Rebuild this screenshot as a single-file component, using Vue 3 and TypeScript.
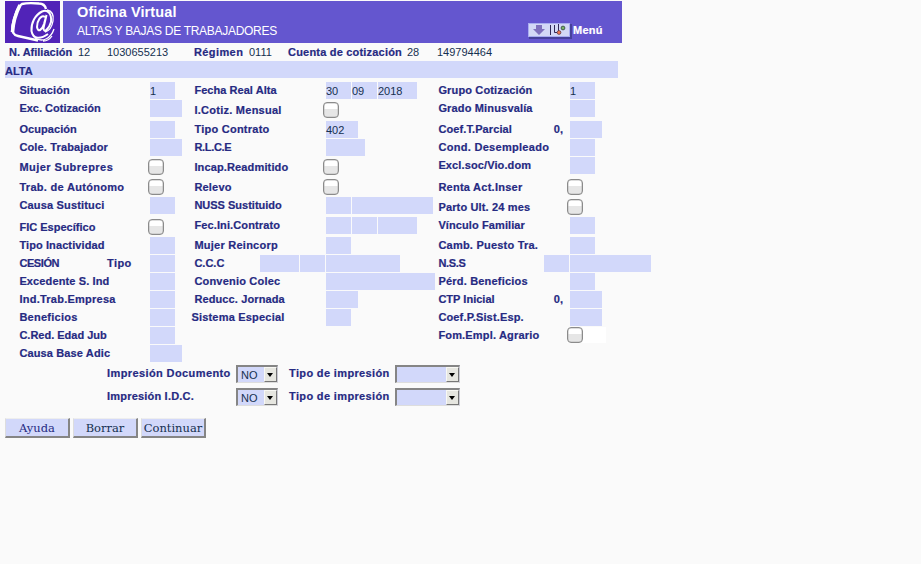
<script setup lang="ts">
interface Cell {
  label: string
  spacing?: number
  middle?: string
  suffix?: string
  before?: number[]
  fields?: number[]
  values?: string[]
  check?: boolean
  tail?: boolean
  outdent?: boolean
}
interface Row {
  height: number
  cells: Cell[]
}

const rows: Row[] = [
  { height: 18, cells: [
    { label: 'Situación', spacing: 0.1, fields: [25], values: ['1'] },
    { label: 'Fecha Real Alta', spacing: 0.05, fields: [25, 25, 39], values: ['30', '09', '2018'] },
    { label: 'Grupo Cotización', spacing: 0.15, fields: [25], values: ['1'] },
  ] },
  { height: 21, cells: [
    { label: 'Exc. Cotización', spacing: 0, fields: [32] },
    { label: 'I.Cotiz. Mensual', spacing: 0.26, check: true },
    { label: 'Grado Minusvalía', spacing: 0.16, fields: [25] },
  ] },
  { height: 18, cells: [
    { label: 'Ocupación', spacing: 0.07, fields: [25] },
    { label: 'Tipo Contrato', spacing: 0.25, fields: [32], values: ['402'] },
    { label: 'Coef.T.Parcial', spacing: 0.1, suffix: '0,', fields: [32] },
  ] },
  { height: 18, cells: [
    { label: 'Cole. Trabajador', spacing: 0.15, fields: [32] },
    { label: 'R.L.C.E', spacing: -0.3, fields: [39] },
    { label: 'Cond. Desempleado', spacing: 0.3, fields: [25] },
  ] },
  { height: 20, cells: [
    { label: 'Mujer Subrepres', spacing: 0.47, check: true },
    { label: 'Incap.Readmitido', spacing: 0.14, check: true },
    { label: 'Excl.soc/Vio.dom', spacing: 0.12, fields: [25] },
  ] },
  { height: 20, cells: [
    { label: 'Trab. de Autónomo', spacing: 0.3, check: true },
    { label: 'Relevo', spacing: 0.2, check: true },
    { label: 'Renta Act.Inser', spacing: 0.25, check: true },
  ] },
  { height: 20, cells: [
    { label: 'Causa Sustituci', spacing: 0.17, fields: [25] },
    { label: 'NUSS Sustituido', spacing: 0, fields: [25, 81] },
    { label: 'Parto Ult. 24 mes', spacing: 0.15, check: true },
  ] },
  { height: 20, cells: [
    { label: 'FIC Específico', spacing: 0.02, check: true },
    { label: 'Fec.Ini.Contrato', spacing: 0.12, fields: [25, 25, 39] },
    { label: 'Vínculo Familiar', spacing: 0.1, fields: [25] },
  ] },
  { height: 18, cells: [
    { label: 'Tipo Inactividad', spacing: 0.1, fields: [25] },
    { label: 'Mujer Reincorp', spacing: 0.25, fields: [25] },
    { label: 'Camb. Puesto Tra.', spacing: 0.22, fields: [25] },
  ] },
  { height: 18, cells: [
    { label: 'CESIÓN', spacing: -0.4, middle: 'Tipo', fields: [25] },
    { label: 'C.C.C', spacing: 0, before: [39, 25], fields: [74] },
    { label: 'N.S.S', spacing: -0.3, before: [25], fields: [81] },
  ] },
  { height: 18, cells: [
    { label: 'Excedente S. Ind', spacing: 0.12, fields: [25] },
    { label: 'Convenio Colec', spacing: 0.2, fields: [109] },
    { label: 'Pérd. Beneficios', spacing: 0.2, fields: [25] },
  ] },
  { height: 18, cells: [
    { label: 'Ind.Trab.Empresa', spacing: 0.25, fields: [25] },
    { label: 'Reducc. Jornada', spacing: 0.12, fields: [32] },
    { label: 'CTP Inicial', spacing: 0.02, suffix: '0,', fields: [32] },
  ] },
  { height: 18, cells: [
    { label: 'Beneficios', spacing: 0.25, fields: [25] },
    { label: 'Sistema Especial', spacing: 0.2, fields: [25], outdent: true },
    { label: 'Coef.P.Sist.Esp.', spacing: 0.15, fields: [32] },
  ] },
  { height: 18, cells: [
    { label: 'C.Red. Edad Jub', spacing: 0, fields: [25] },
    { label: '' },
    { label: 'Fom.Empl. Agrario', spacing: 0.17, check: true, tail: true },
  ] },
  { height: 18, cells: [
    { label: 'Causa Base Adic', spacing: 0.13, fields: [32] },
    { label: '' },
    { label: '' },
  ] },
]

const prints: string[] = ['Impresión Documento', 'Impresión I.D.C.']
const actions: string[] = ['Ayuda', 'Borrar', 'Continuar']
</script>

<template>
  <main class="page">
    <header class="top">
      <svg class="logo" viewBox="0 0 55 42" width="55" height="42">
        <rect width="55" height="42" fill="#5123b8" />
        <path d="M41 8C40 4 38 2.500 34 2.500C28 2 21 2 17 3C13 5 9 16 7.500 25C6.500 31 8 34 13 35L33 39.500" fill="none" stroke="#fff" stroke-width="2.400" />
        <path d="M15 4C11 12 8 22 7.500 31" fill="none" stroke="#fff" stroke-width="3.600" />
        <path d="M40 16C36 13 32 20 32 26C33 32 37 29 39 23L41.500 14L38.500 27C38.500 33 44 28 46 21C47 13 43 8 37 10.500C30 14 26 22 26.500 30C28 39 36 38 43 33" fill="none" stroke="#fff" stroke-width="2" />
        <path d="M42 9C47 10 49 14 48 20C47 26 44 30 40 31M30 37C38 42 46 37 49 28M38 40C42 40 45 38 47 35" fill="none" stroke="#fff" stroke-width="1.300" />
      </svg>
      <div class="banner">
        <div class="titles">
          <h1>Oficina Virtual</h1>
          <p>ALTAS Y BAJAS DE TRABAJADORES</p>
        </div>
        <div class="menu">
          <svg width="44" height="17" viewBox="0 0 44 17">
            <rect x="1" y="1" width="43" height="15" fill="#46419b" />
            <rect width="42" height="14" fill="#a9adf0" />
            <rect x="1" y="1" width="40" height="12" fill="#d3d8f6" />
            <path d="M8 2h6v4h3l-6 6-6-6h3z" fill="#7f70bd" />
            <path d="M22.500 2v10M26.500 2v7.500h2.500M30.500 1v7" fill="none" stroke="#302858" />
            <circle cx="31" cy="9.500" r="1.900" fill="#f07850" stroke="#513044" stroke-width=".7" />
            <circle cx="35" cy="5" r="1.900" fill="#79b565" stroke="#304040" stroke-width=".8" />
          </svg>
          <b>Menú</b>
        </div>
      </div>
    </header>
    <div class="account">
      <b class="a1">N. Afiliación</b><span class="a2">12</span><span class="a3">1030655213</span>
      <b class="a4">Régimen</b><span class="a5">0111</span>
      <b class="a6">Cuenta de cotización</b><span class="a7">28</span><span>149794464</span>
    </div>
    <h2>ALTA</h2>
    <form class="form" @submit.prevent>
      <div v-for="(row, r) in rows" :key="r" class="row" :style="{ height: row.height + 'px' }">
        <div v-for="(cell, c) in row.cells" :key="c" class="cell">
          <div class="lead" :class="{ low: cell.check && !cell.tail, outdent: cell.outdent }">
            <b :style="{ letterSpacing: (cell.spacing ?? 0) + 'px' }">{{ cell.label }}</b>
            <b v-if="cell.middle" class="middle">{{ cell.middle }}</b>
            <b v-if="cell.suffix" class="suffix">{{ cell.suffix }}</b>
            <div v-if="cell.before" class="before">
              <span v-for="(w, i) in cell.before" :key="i" class="field" :style="{ width: w + 'px' }"></span>
            </div>
          </div>
          <span v-for="(w, i) in cell.fields" :key="i" class="field" :style="{ width: w + 'px' }">{{ cell.values?.[i] }}</span>
          <span v-if="cell.check" class="check-area" :class="{ tail: cell.tail }"><i class="check"></i></span>
        </div>
      </div>
    </form>
    <div class="prints">
      <div v-for="(p, i) in prints" :key="p" class="print">
        <b class="p1" :class="{ tight: i === 1 }">{{ p }}</b>
        <span class="select small">NO<i class="arrow"></i></span>
        <b class="p2">Tipo de impresión</b>
        <span class="select wide"><i class="arrow"></i></span>
      </div>
    </div>
    <div class="actions">
      <button v-for="(a, i) in actions" :key="a" type="button" :class="{ first: i === 0 }">{{ a }}</button>
    </div>
  </main>
</template>

<style>
body { background: #fafafa; }
</style>

<style scoped>
.page { box-sizing: border-box; width: 921px; height: 564px; padding: 1px 0 0 5px; overflow: hidden; background: #fafafa; font: 11px/17px "Liberation Sans", Arial, sans-serif; color: #153050; }
b { color: #262a82; letter-spacing: .4px; white-space: nowrap; -webkit-text-stroke: .2px currentColor; }
.top { display: flex; gap: 3px; height: 42px; }
.logo { display: block; }
.banner { display: flex; width: 545px; padding-left: 14px; background: #6456cf; color: #fff; }
.titles { width: 451px; }
h1 { margin: 3px 0 0; font-size: 14.5px; line-height: 17px; letter-spacing: .1px; }
.titles p { margin: 1px 0 0; font-size: 12px; line-height: 18px; letter-spacing: -.29px; }
.menu { display: flex; gap: 1px; padding-top: 22px; }
.menu b { color: #fff; line-height: 15px; letter-spacing: .25px; }
.account { display: flex; height: 18px; padding-left: 4px; line-height: 18px; }
.a1 { width: 69px; letter-spacing: 0; } .a2 { width: 29px; } .a3 { width: 87px; } .a4 { width: 55px; } .a5 { width: 39px; } .a6 { width: 119px; letter-spacing: .2px; } .a7 { width: 30px; }
h2 { width: 613px; height: 17px; margin: 0 0 4px; background: #d2d8fa; color: #262a82; font-size: 11px; line-height: 20px; -webkit-text-stroke: .2px currentColor; }
.form { margin-left: 14px; }
.row { display: grid; grid-template-columns: 175px 244px 250px; }
.cell { display: flex; gap: 1px; height: 17px; }
.lead { display: flex; flex: none; width: 131px; }
.cell:first-child .lead { width: 130px; }
.lead > b { line-height: 16px; padding-left: .4px; }
.low { padding-top: 2px; }
.outdent > b { margin-left: -3px; }
.middle { margin-left: auto; width: 42px; }
.suffix { margin-left: auto; margin-right: 6px; letter-spacing: 0; }
.before { display: flex; gap: 1px; margin-left: auto; }
.field { flex: none; height: 17px; background: #d2d8fa; line-height: 19px; }
.check-area { width: 36px; margin-left: -3px; padding-top: 2px; }
.cell:first-child .check-area { margin-left: -2px; }
.check-area.tail { height: 16px; padding: 0; width: 39px; background: #fff; }
.check { display: block; box-sizing: border-box; width: 16px; height: 16px; border: 1px solid #8b8b8b; border-radius: 4px; background: linear-gradient(#fff 45%, #e6e6e6 46%); box-shadow: inset 0 0 0 .5px #bbb; }
.prints { display: flex; flex-direction: column; gap: 5px; margin: 2px 0 12px 102px; }
.print { display: flex; height: 18px; }
.p1 { width: 129px; } .p2 { width: 106px; letter-spacing: .36px; }
.tight { letter-spacing: .2px; }
.select { position: relative; box-sizing: border-box; height: 18px; border: 2px solid #858585; border-right: 1px solid #cbcbd5; border-bottom: 1px solid #ddd; background: #d2d8fa; padding-left: 3px; line-height: 16px; }
.small { width: 42px; margin-right: 11px; }
.wide { width: 65px; }
.arrow { position: absolute; box-sizing: border-box; right: 0; top: 0; width: 13px; height: 15px; background: #e6e6e0; border: 1px solid #f8f8f4; border-right-color: #777; border-bottom-color: #777; }
.arrow::after { content: ""; position: absolute; left: 2px; top: 5px; border: 4px solid transparent; border-width: 4px 3.5px 0; border-top-color: #000; }
.actions { display: flex; gap: 3px; }
button { box-sizing: border-box; width: 65px; height: 20px; padding: 0; border: 2px solid #858585; border-top: 1px solid #eee; border-left: 1px solid #ddd; background: #d2d8fa; color: #153050; font: 11.5px/16px "DejaVu Serif", serif; white-space: nowrap; }
button.first { color: #262a82; }
</style>
